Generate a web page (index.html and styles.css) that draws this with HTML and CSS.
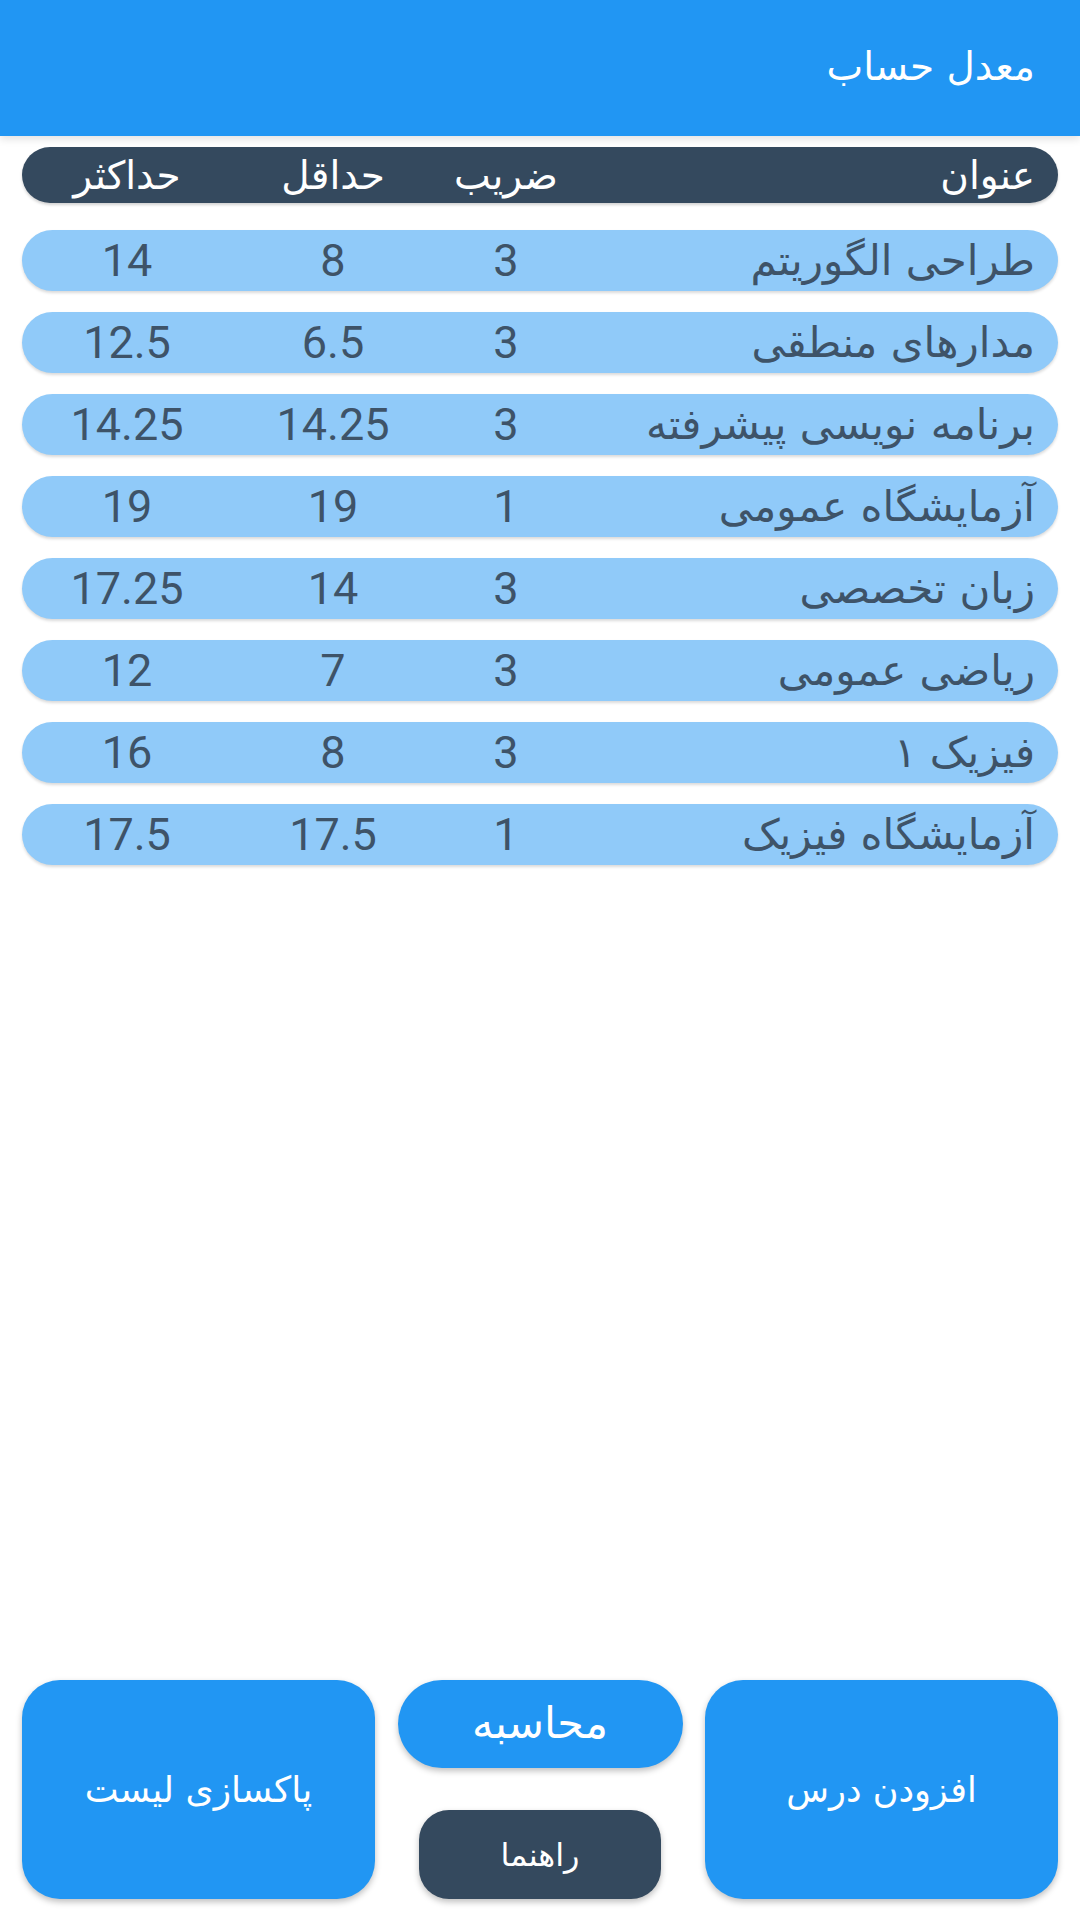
FILE: index.html
```html
<!DOCTYPE html>
<html lang="fa" dir="rtl">
<head>
<meta charset="utf-8">
<link rel="stylesheet" href="styles.css">
</head>
<body>
<div class="app">
  <header class="appbar"><span class="title">معدل حساب</span></header>
  <main class="table">
    <div class="row head">
      <span class="name">عنوان</span><span class="cell">ضریب</span><span class="cell">حداقل</span><span class="cell">حداکثر</span>
    </div>
    <div class="row item"><span class="name">طراحی الگوریتم</span><span class="cell">3</span><span class="cell">8</span><span class="cell">14</span></div>
    <div class="row item"><span class="name">مدارهای منطقی</span><span class="cell">3</span><span class="cell">6.5</span><span class="cell">12.5</span></div>
    <div class="row item"><span class="name">برنامه نویسی پیشرفته</span><span class="cell">3</span><span class="cell">14.25</span><span class="cell">14.25</span></div>
    <div class="row item"><span class="name">آزمایشگاه عمومی</span><span class="cell">1</span><span class="cell">19</span><span class="cell">19</span></div>
    <div class="row item"><span class="name">زبان تخصصی</span><span class="cell">3</span><span class="cell">14</span><span class="cell">17.25</span></div>
    <div class="row item"><span class="name">ریاضی عمومی</span><span class="cell">3</span><span class="cell">7</span><span class="cell">12</span></div>
    <div class="row item"><span class="name">فیزیک ۱</span><span class="cell">3</span><span class="cell">8</span><span class="cell">16</span></div>
    <div class="row item"><span class="name">آزمایشگاه فیزیک</span><span class="cell">1</span><span class="cell">17.5</span><span class="cell">17.5</span></div>
  </main>
  <footer class="actions">
    <button class="btn big">افزودن درس</button>
    <div class="middle">
      <button class="btn calc">محاسبه</button>
      <button class="btn help">راهنما</button>
    </div>
    <button class="btn big clear">پاکسازی لیست</button>
  </footer>
</div>
</body>
</html>
```
FILE: styles.css
```css
* { box-sizing: border-box; }
html, body { margin: 0; padding: 0; }
body {
  width: 1080px;
  height: 1920px;
  background: #ffffff;
  font-family: Roboto, "DejaVu Sans", sans-serif;
  overflow: hidden;
}
.app {
  height: 1920px;
  display: flex;
  flex-direction: column;
}
.appbar {
  height: 136px;
  background: #2196F3;
  display: flex;
  align-items: center;
  padding: 0 45px 4px 45px;
  box-shadow: 0 3px 8px rgba(0,0,0,0.12);
  position: relative;
  z-index: 1;
}
.title {
  color: #ffffff;
  font-family: "DejaVu Sans", sans-serif;
  font-size: 39px;
}
.table {
  flex: 1;
  padding: 11px 22px 0 22px;
  display: flex;
  flex-direction: column;
  gap: 21px;
}
.row {
  display: grid;
  grid-template-columns: 1fr 144px 202px 210px;
  align-items: center;
  border-radius: 31px;
  height: 61px;
  direction: rtl;
}
.row.head {
  background: #34495E;
  color: #ffffff;
  height: 56px;
  border-radius: 28px;
  margin-bottom: 6px;
  box-shadow: 0 2px 3px rgba(0,0,0,0.18);
}
.row.item {
  background: #90CAF9;
  color: #3E5368;
  box-shadow: 0 2px 3px rgba(0,0,0,0.15);
}
.name {
  padding-right: 23px;
  font-family: "DejaVu Sans", sans-serif;
  font-size: 42px;
  text-align: right;
  white-space: nowrap;
}
.cell {
  text-align: center;
  font-size: 45px;
  font-family: Roboto, "DejaVu Sans", sans-serif;
}
.head .name, .head .cell {
  font-family: "DejaVu Sans", sans-serif;
  font-size: 39px;
}
.actions {
  display: flex;
  direction: rtl;
  justify-content: space-between;
  align-items: stretch;
  padding: 0 22px 21px 22px;
  height: 240px;
}
.btn {
  border: none;
  font-family: "DejaVu Sans", sans-serif;
  color: #ffffff;
  box-shadow: 0 3px 6px rgba(0,0,0,0.25);
  padding: 0;
}
.big {
  width: 353px;
  background: #2196F3;
  border-radius: 38px;
  font-size: 35px;
}
.big.clear {
  font-size: 36px;
}
.middle {
  width: 285px;
  display: flex;
  flex-direction: column;
  align-items: center;
  justify-content: space-between;
}
.calc {
  width: 285px;
  height: 88px;
  border-radius: 44px;
  background: #2196F3;
  font-size: 43px;
  padding-bottom: 2px;
}
.help {
  width: 242px;
  height: 89px;
  border-radius: 30px;
  background: #34495E;
  font-size: 32px;
}
```
